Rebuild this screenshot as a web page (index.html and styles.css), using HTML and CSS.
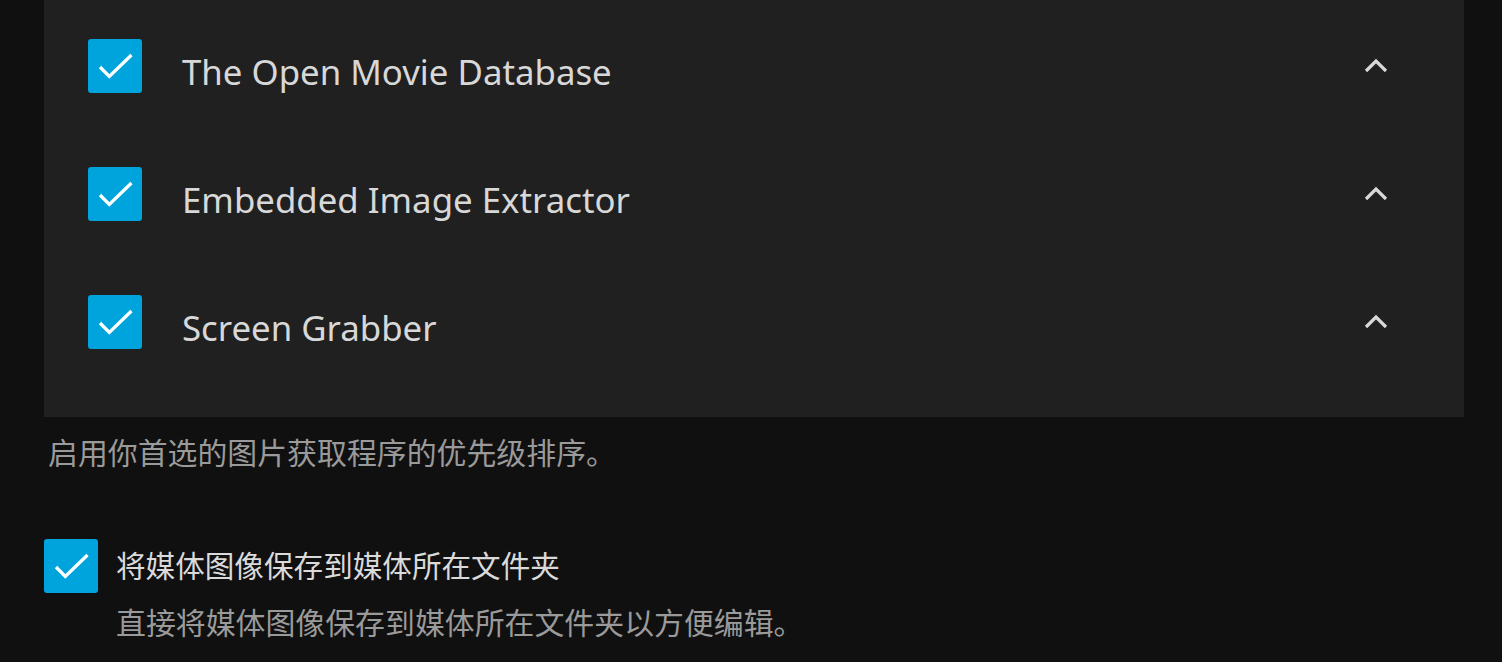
FILE: index.html
```html
<!DOCTYPE html>
<html lang="zh-CN">
<head>
<meta charset="utf-8">
<title>Image fetchers</title>
<link rel="stylesheet" href="styles.css">
</head>
<body>
<div class="page">
  <div class="fetcher-list">
    <div class="fetcher-row">
      <span class="checkbox"><svg viewBox="0 0 54 54"><polyline points="12,28 21.3,37.5 43.5,16"/></svg></span>
      <span class="fetcher-name">The Open Movie Database</span>
      <span class="chevron"><svg viewBox="0 0 24 15"><polyline points="2,13 12,3 22,13"/></svg></span>
    </div>
    <div class="fetcher-row">
      <span class="checkbox"><svg viewBox="0 0 54 54"><polyline points="12,28 21.3,37.5 43.5,16"/></svg></span>
      <span class="fetcher-name">Embedded Image Extractor</span>
      <span class="chevron"><svg viewBox="0 0 24 15"><polyline points="2,13 12,3 22,13"/></svg></span>
    </div>
    <div class="fetcher-row">
      <span class="checkbox"><svg viewBox="0 0 54 54"><polyline points="12,28 21.3,37.5 43.5,16"/></svg></span>
      <span class="fetcher-name">Screen Grabber</span>
      <span class="chevron"><svg viewBox="0 0 24 15"><polyline points="2,13 12,3 22,13"/></svg></span>
    </div>
  </div>
  <div class="field-desc list-desc">启用你首选的图片获取程序的优先级排序。</div>
  <div class="check-field">
    <span class="checkbox"><svg viewBox="0 0 54 54"><polyline points="12,28 21.3,37.5 43.5,16"/></svg></span>
    <span class="check-label">将媒体图像保存到媒体所在文件夹</span>
    <div class="field-desc check-desc">直接将媒体图像保存到媒体所在文件夹以方便编辑。</div>
  </div>
</div>
</body>
</html>
```

FILE: styles.css
```css
html, body {
  margin: 0;
  padding: 0;
  background: #101010;
  overflow: hidden;
}
body {
  font-family: "Noto Sans", "Noto Sans CJK SC", sans-serif;
  color: #dadada;
}
.page {
  padding: 0 38px 0 44px;
}
.fetcher-list {
  background: #202020;
  padding: 2px 0 31px 0;
}
.fetcher-row {
  height: 128px;
  display: flex;
  align-items: center;
  padding: 0 64px 0 44px;
}
.checkbox {
  width: 54px;
  height: 54px;
  flex: 0 0 54px;
  background: #00a4dc;
  border-radius: 3px;
  display: block;
}
.checkbox svg {
  width: 54px;
  height: 54px;
  display: block;
}
.checkbox polyline {
  fill: none;
  stroke: #fff;
  stroke-width: 3.3;
  stroke-linecap: butt;
  stroke-linejoin: miter;
}
.fetcher-name {
  flex: 1;
  margin-left: 40px;
  font-size: 34.8px;
  line-height: 40px;
  padding-top: 12px;
  color: #d8d8d8;
}
.chevron {
  width: 48px;
  height: 48px;
  display: flex;
  align-items: center;
  justify-content: center;
}
.chevron svg {
  width: 24px;
  height: 15px;
  display: block;
  margin-top: -1px;
}
.chevron polyline {
  fill: none;
  stroke: #d8d8d8;
  stroke-width: 3.2;
}
.field-desc {
  font-size: 29.9px;
  line-height: 40px;
  color: #9a9a9a;
}
.list-desc {
  margin-top: 16px;
  padding-left: 4px;
}
.check-field {
  margin-top: 66px;
  display: grid;
  grid-template-columns: 54px auto;
  column-gap: 18px;
  align-items: center;
}
.check-label {
  font-size: 29.6px;
  line-height: 40px;
  color: #dadada;
}
.check-desc {
  grid-column: 2;
  margin-top: 10px;
}
```
